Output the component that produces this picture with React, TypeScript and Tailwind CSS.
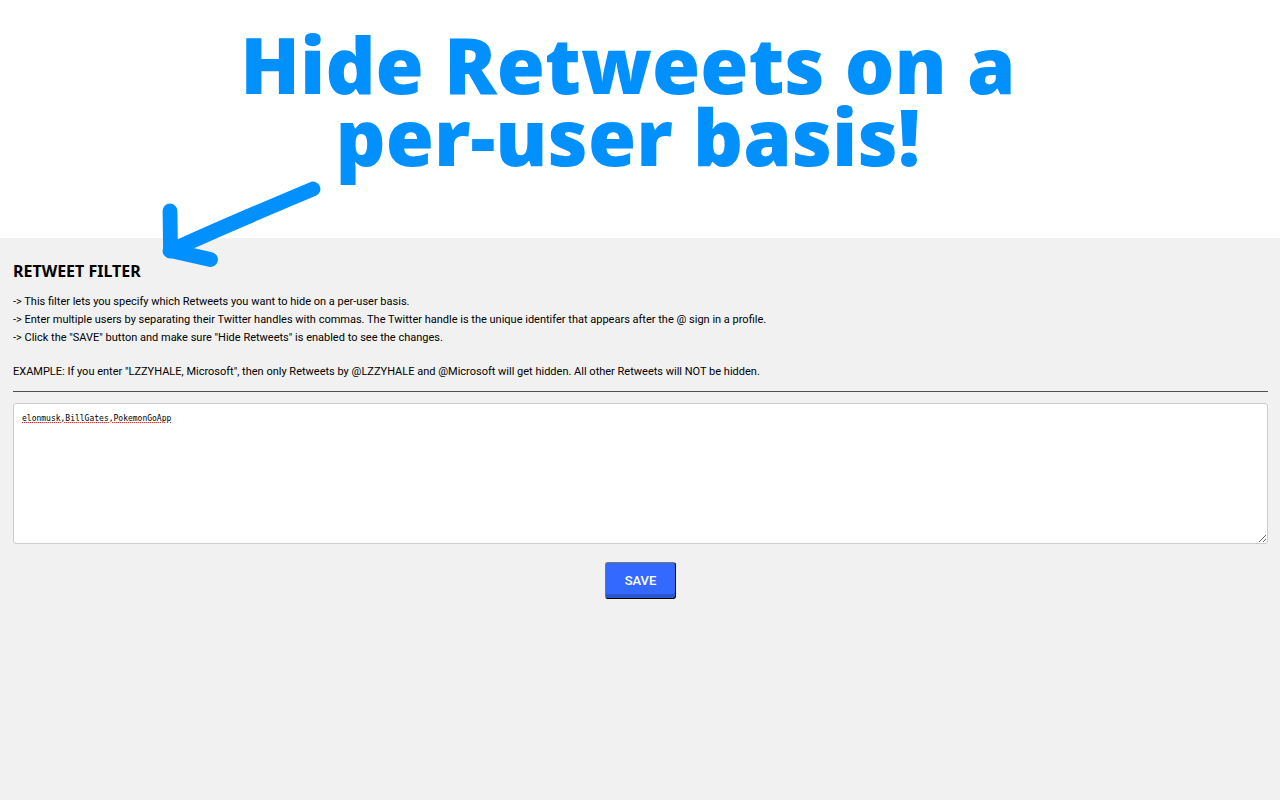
import React, { useState } from 'react';

const instructions = [
  '-> This filter lets you specify which Retweets you want to hide on a per-user basis.',
  '-> Enter multiple users by separating their Twitter handles with commas. The Twitter handle is the unique identifer that appears after the @ sign in a profile.',
  '-> Click the "SAVE" button and make sure "Hide Retweets" is enabled to see the changes.'
];

const ArrowIcon: React.FC = () => (
  <svg
    className="absolute left-[150px] top-[170px] h-[110px] w-[190px]"
    viewBox="0 0 190 110"
    fill="none"
    stroke="#0090ff"
    strokeWidth="14.8"
    strokeLinecap="round"
    strokeLinejoin="round"
    aria-hidden="true"
  >
    <path d="M163 19 C120 37 70 58 20 81" />
    <path d="M20 41 L20.5 80.5 L60.5 89.5" />
  </svg>
);

const Banner: React.FC = () => (
  <header className="relative h-[238px] bg-white pt-7">
    <h1 className="mr-6 text-center font-['Open_Sans',sans-serif] text-[78px] leading-[72px] font-extrabold text-[#0090ff]">
      Hide Retweets on a
      <br />
      per-user basis!
    </h1>
    <ArrowIcon />
  </header>
);

const App: React.FC = () => {
  const [handles, setHandles] = useState('elonmusk,BillGates,PokemonGoApp');

  const handleSubmit = (e: React.FormEvent) => {
    e.preventDefault();
    setHandles(handles.trim());
  };

  return (
    <div className="min-h-screen bg-[#f1f1f1] font-[Roboto,sans-serif] text-black">
      <Banner />

      <form onSubmit={handleSubmit} className="px-3 pt-[21px] pl-[13px]">
        <h2 className="font-['Noto_Sans',sans-serif] text-base leading-6 font-bold">
          <label htmlFor="handles">RETWEET FILTER</label>
        </h2>

        {/* Instructions */}
        <div className="mt-[10px] text-[11px] leading-[18px]">
          {instructions.map((line) => (
            <p key={line}>{line}</p>
          ))}
          <p className="mt-4">
            EXAMPLE: If you enter "LZZYHALE, Microsoft", then only Retweets by @LZZYHALE and @Microsoft will get hidden. All other Retweets will NOT be hidden.
          </p>
        </div>

        <hr className="mt-[10px] border-t border-[#505050]" />

        <textarea
          id="handles"
          value={handles}
          onChange={(e) => setHandles(e.target.value)}
          spellCheck={false}
          className="mt-[11px] block h-[141px] w-full resize rounded-[3px] border border-[#cccccc] bg-white px-2 py-[9px] font-['DejaVu_Sans_Mono',monospace] text-[8px] leading-3 underline decoration-red-500 decoration-dotted decoration-1 underline-offset-1 outline-none"
        />

        <button
          type="submit"
          className="mx-auto mt-[18px] block h-[37px] w-[71px] rounded-[3px] border border-t-[#767676] border-r-black border-b-black border-l-[#767676] bg-[#3369ff] text-[13px] font-medium text-white shadow-[inset_0_-4px_0_#2a56d0]"
        >
          SAVE
        </button>
      </form>
    </div>
  );
};

export default App;
